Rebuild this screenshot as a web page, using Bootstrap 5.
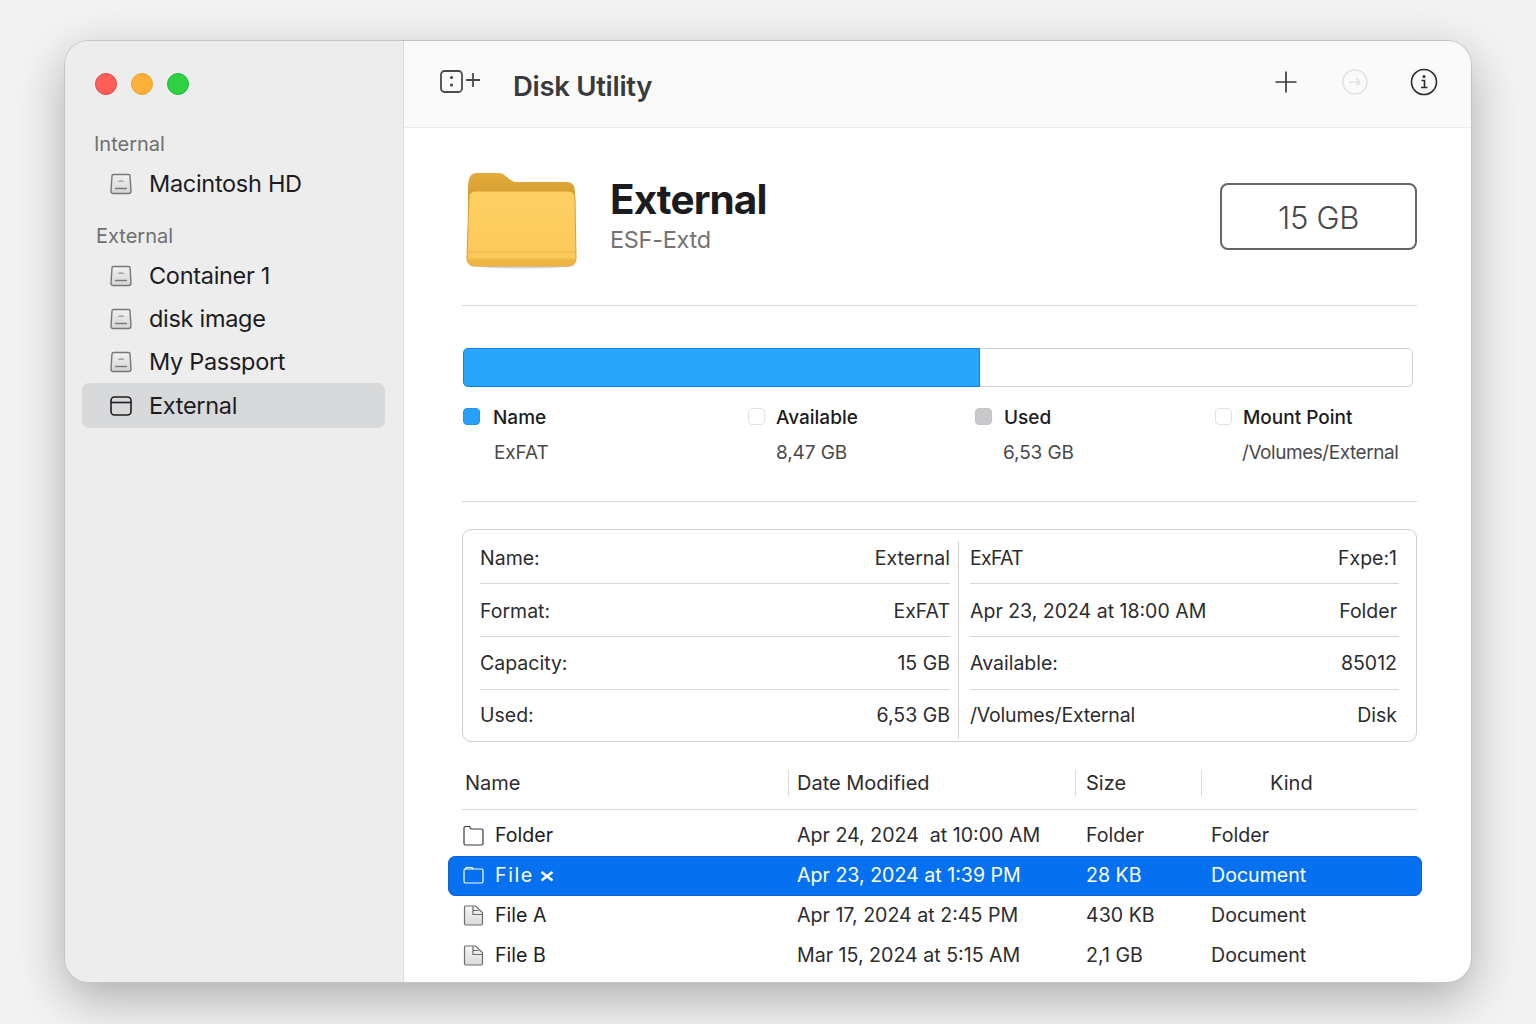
<!DOCTYPE html>
<html lang="en">
<head>
    <meta charset="UTF-8">
    <meta name="viewport" content="width=device-width, initial-scale=1.0">
    <title>Disk Utility</title>
    <link href="https://cdn.jsdelivr.net/npm/bootstrap@5.3.3/dist/css/bootstrap.min.css" rel="stylesheet">
    <style>
        html, body { height: 100%; }
        body { background: #f3f3f3; font-family: Inter, "Liberation Sans", sans-serif; color: #1d1d1f; overflow: hidden; padding: 41px 65px 42px; }
        .app-window { height: 941px; border-radius: 24px; overflow: hidden; background: #fff; box-shadow: 0 0 0 1px #c4c4c4, 0 16px 50px rgba(0,0,0,.3); }
        .side-pane { width: 339px; flex: none; background: #ededed; border-right: 1px solid #dcdcdc; padding: 32px 18px 0 17px; }
        .traffic { gap: 14px; padding-left: 13px; margin-bottom: 37px; }
        .traffic span { width: 22px; height: 22px; border-radius: 50%; border: 1px solid; }
        .t-red { background: #fe5f57; border-color: #e5443c !important; }
        .t-yellow { background: #feb13a; border-color: #ec9f25 !important; }
        .t-green { background: #30d043; border-color: #1fbb33 !important; }
        .side-head { font-size: 20px; line-height: 24px; color: #6f6f71; padding-left: 12px; }
        .side-head.second { padding-left: 14px; margin-top: 19px; }
        .side-head + .side-item { margin-top: 6px; }
        .side-item { height: 43px; font-size: 23.5px; letter-spacing: -.3px; color: #1c1c1e; padding-left: 27px; gap: 16px; border-radius: 7px; }
        .side-item.picked { height: 45px; background: #d8d9db; }
        .main-pane { min-width: 0; }
        .top-bar { height: 87px; flex: none; background: #fafafa; border-bottom: 1px solid #ececec; padding: 0 33px 0 36px; }
        .top-title { font-size: 27.5px; font-weight: 600; letter-spacing: -.3px; color: #3a3a3c; margin: 5px 0 0 31px; }
        .top-icon { margin-bottom: 4px; }
        .top-tools { gap: 41px; margin-bottom: 5px; }
        .content-pane { padding: 44px 54px 0 58px; overflow: hidden; }
        .hero-row { height: 134px; border-bottom: 1px solid #d9d9d9; }
        .hero-art { margin: 0 32px 0 4px; }
        .hero-text { padding-top: 3px; }
        .hero-name { font-size: 40.5px; font-weight: 700; line-height: 50px; letter-spacing: -.9px; color: #1c1c1e; }
        .hero-sub { font-size: 23.5px; line-height: 29px; color: #77716f; letter-spacing: -.3px; }
        .cap-box { width: 197px; height: 67px; margin-top: 11px; padding-top: 4px; border: 2px solid #666; border-radius: 8px; font-size: 31px; font-weight: 300; color: #48484a; letter-spacing: -.3px; }
        .use-bar { height: 39px; width: 950px; margin: 42px 0 0 1px; border: 1px solid #cfcfcf; border-radius: 5px; }
        .use-fill { background: #28a6fb; border: 1px solid #0f82ec; border-radius: 5px 0 0 5px; margin: -1px 0 -1px -1px; }
        .legend-row { display: grid; grid-template-columns: 285px 227px 240px 1fr; height: 115px; border-bottom: 1px solid #d9d9d9; padding: 19px 0 0 1px; }
        .legend-key { font-size: 19px; font-weight: 500; line-height: 24px; color: #1c1c1e; gap: 11px; }
        .legend-key.wide { gap: 13px; }
        .legend-key.mid { gap: 12px; }
        .swatch { width: 17px; height: 17px; border-radius: 4px; flex: none; border: 1px solid #e2e2e2; margin-top: -3px; }
        .swatch-blue { background: #2a9ff8; border-color: #2590ea; }
        .swatch-grey { background: #c9c9cb; border-color: #c4c4c6; }
        .legend-val { font-size: 19px; line-height: 24px; color: #4a4a4c; padding: 11px 0 0 31px; letter-spacing: -.1px; }
        .legend-val.tight { padding-left: 28px; }
        .legend-val.narrow { letter-spacing: -.45px; padding-left: 27px; }
        .info-box { display: grid; grid-template-columns: 478px 1fr; height: 213px; margin-top: 27px; border: 1.5px solid #cfcfcf; border-radius: 9px; padding: 11px 17px 10px 17px; }
        .info-col { min-width: 0; }
        .info-col + .info-col { border-left: 1px solid #d6d6d6; padding-left: 11px; }
        .info-col:first-child { padding-right: 8px; }
        .info-line { height: 53px; padding-top: 2px; font-size: 19.5px; color: #2c2c2e; border-bottom: 1px solid #d6d6d6; }
        .info-line:first-child { height: 43px; padding: 0 0 6px; }
        .info-line:nth-child(2) { padding-top: 4px; }
        .info-line:last-child { border-bottom: 0; height: 49px; }
        .info-val-pad { padding-right: 2px; }
        .snug-text { letter-spacing: -.7px; }
        .narrow-text { letter-spacing: -.2px; }
        .list-area { margin: 0 -5px 0 -14px; }
        .file-head, .file-line { display: grid; font-size: 19.6px; align-items: center; }
        .file-head { grid-template-columns: 326px 287px 126px 1fr; font-size: 20px; height: 68px; margin: 0 5px 0 14px; border-bottom: 1px solid #d9d9d9; color: #2c2c2e; padding-top: 14px; }
        .file-head > div { height: 26px; line-height: 26px; padding-left: 8px; border-left: 1px solid #dadada; }
        .file-head > div:first-child { border-left: 0; padding-left: 3px; }
        .file-head > div:nth-child(3) { padding-left: 10px; }
        .file-head > div:last-child { padding-left: 68px; }
        .file-line { grid-template-columns: 334px 289px 125px 1fr; height: 40px; color: #2c2c2e; padding-left: 15px; border-radius: 8px; }
        .file-rows { padding-top: 6px; }
        .file-line.picked { background: #0671f0; color: #fff; box-shadow: inset 0 0 0 1px #0a64d8; }
        .file-name { gap: 11px; color: #1c1c1e; }
        .picked .file-name { color: #fff; }
        .spread-text { letter-spacing: 1.600px; }
        .x-mark { margin-left: -5px; }
    </style>
</head>
<body>
    <div class="app-window d-flex">
        <aside class="side-pane">
            <div class="traffic d-flex">
                <span class="t-red"></span><span class="t-yellow"></span><span class="t-green"></span>
            </div>
            <div class="side-head">Internal</div>
            <div class="side-item d-flex align-items-center">
                <svg width="24" height="24" viewBox="0 0 24 24"><use href="#disk-icon"/></svg>Macintosh HD
            </div>
            <div class="side-head second">External</div>
            <div class="side-item d-flex align-items-center">
                <svg width="24" height="24" viewBox="0 0 24 24"><use href="#disk-icon"/></svg>Container 1
            </div>
            <div class="side-item d-flex align-items-center">
                <svg width="24" height="24" viewBox="0 0 24 24"><use href="#disk-icon"/></svg>disk image
            </div>
            <div class="side-item d-flex align-items-center">
                <svg width="24" height="24" viewBox="0 0 24 24"><use href="#disk-icon"/></svg>My Passport
            </div>
            <div class="side-item picked d-flex align-items-center">
                <svg width="24" height="24" viewBox="0 0 24 24" fill="none" stroke="#1c1c1e" stroke-width="1.6"><rect x="2" y="3" width="20" height="18" rx="3.5"/><path d="M2 8.5h20"/></svg>External
            </div>
        </aside>
        <main class="main-pane flex-grow-1 d-flex flex-column">
            <header class="top-bar d-flex align-items-center">
                <svg class="top-icon" width="42" height="26" viewBox="0 0 42 26" fill="none" stroke="#4a4a4c" stroke-width="1.8"><rect x="1" y="2" width="21" height="21" rx="3.5"/><circle cx="11.5" cy="8.5" r="1.6" fill="#4a4a4c" stroke="none"/><circle cx="11.5" cy="16" r="1.6" fill="#4a4a4c" stroke="none"/><path d="M26 11h14M33 4v14"/></svg>
                <div class="top-title">Disk Utility</div>
                <div class="top-tools d-flex align-items-center ms-auto">
                    <svg width="28" height="28" viewBox="0 0 28 28" fill="none" stroke="#3a3a3c" stroke-width="1.7"><path d="M3.5 14h21M14 3.5v21"/></svg>
                    <svg width="28" height="28" viewBox="0 0 28 28" fill="none" stroke="#e2e2e2" stroke-width="1.5"><circle cx="14" cy="14" r="12"/><path d="M8 14h11M15.500 10.500l3.500 3.500-3.500 3.500"/></svg>
                    <svg width="28" height="28" viewBox="0 0 28 28" fill="none" stroke="#2c2c2e" stroke-width="1.6"><circle cx="14" cy="14" r="12.500"/><path d="M11.500 12.500h3v7M11 19.500h6.500"/><circle cx="14" cy="8.500" r="1.500" fill="#2c2c2e" stroke="none"/></svg>
                </div>
            </header>
            <section class="content-pane flex-grow-1">
                <div class="hero-row d-flex">
                    <svg class="hero-art" width="112" height="98" viewBox="0 0 112 98">
                        <defs>
                            <linearGradient id="folderBack" x1="0" y1="0" x2="0" y2="1"><stop offset="0" stop-color="#e2ab3c"/><stop offset="1" stop-color="#cf9526"/></linearGradient>
                            <linearGradient id="folderFront" x1="0" y1="0" x2="0" y2="1"><stop offset="0" stop-color="#fdcf62"/><stop offset="1" stop-color="#fcc95a"/></linearGradient>
                        </defs>
                        <ellipse cx="56" cy="93" rx="53" ry="3.500" fill="#000" opacity=".16"/>
                        <path d="M2 18 C2 6 4 1 11 1 H33 C39 1 42 8 49 10 H100 C106 10 109 13 109 20 V40 H2 Z" fill="url(#folderBack)"/>
                        <path d="M1 86 L3 25 C3 21 6 19 10 19 H101 C106 19 109 21 109 26 L110 86 C110 91 107 94 102 94 H9 C4 94 1 91 1 86 Z" fill="url(#folderFront)" stroke="#d99e30" stroke-width="1"/>
                        <path d="M1.500 80 H109.500" stroke="#eeb13f" stroke-width="1"/>
                        <path d="M1.500 87 H109.500" stroke="#eeb13f" stroke-width="1"/>
                        <path d="M1.500 88 C2 91 5 93.500 9 93.500 H102 C106 93.500 109 91 109.500 88 Z" fill="#efb543"/>
                    </svg>
                    <div class="hero-text">
                        <div class="hero-name">External</div>
                        <div class="hero-sub">ESF-Extd</div>
                    </div>
                    <div class="cap-box d-flex align-items-center justify-content-center ms-auto">15 GB</div>
                </div>

                <div class="use-bar d-flex">
                    <div class="use-fill" style="width: 54.5%"></div>
                </div>

                <div class="legend-row">
                    <div>
                        <div class="legend-key wide d-flex align-items-center"><span class="swatch swatch-blue"></span>Name</div>
                        <div class="legend-val">ExFAT</div>
                    </div>
                    <div>
                        <div class="legend-key d-flex align-items-center"><span class="swatch"></span>Available</div>
                        <div class="legend-val tight">8,47 GB</div>
                    </div>
                    <div>
                        <div class="legend-key mid d-flex align-items-center"><span class="swatch swatch-grey"></span>Used</div>
                        <div class="legend-val tight">6,53 GB</div>
                    </div>
                    <div>
                        <div class="legend-key d-flex align-items-center"><span class="swatch"></span>Mount Point</div>
                        <div class="legend-val narrow">/Volumes/External</div>
                    </div>
                </div>

                <div class="info-box">
                    <div class="info-col">
                        <div class="info-line d-flex justify-content-between align-items-center"><span>Name:</span><span>External</span></div>
                        <div class="info-line d-flex justify-content-between align-items-center"><span>Format:</span><span>ExFAT</span></div>
                        <div class="info-line d-flex justify-content-between align-items-center"><span>Capacity:</span><span>15 GB</span></div>
                        <div class="info-line d-flex justify-content-between align-items-center"><span>Used:</span><span>6,53 GB</span></div>
                    </div>
                    <div class="info-col">
                        <div class="info-line d-flex justify-content-between align-items-center"><span class="snug-text">ExFAT</span><span class="info-val-pad">Fxpe:1</span></div>
                        <div class="info-line d-flex justify-content-between align-items-center"><span>Apr 23, 2024 at 18:00 AM</span><span class="info-val-pad">Folder</span></div>
                        <div class="info-line d-flex justify-content-between align-items-center"><span>Available:</span><span class="info-val-pad">85012</span></div>
                        <div class="info-line d-flex justify-content-between align-items-center"><span class="narrow-text">/Volumes/External</span><span class="info-val-pad">Disk</span></div>
                    </div>
                </div>

                <div class="list-area">
                    <div class="file-head">
                        <div>Name</div><div>Date Modified</div><div>Size</div><div>Kind</div>
                    </div>
                    <div class="file-rows">
                        <div class="file-line">
                            <div class="file-name d-flex align-items-center"><svg width="21" height="21" viewBox="0 0 21 21" fill="none" stroke="#3a3a3c" stroke-width="1.2"><path d="M1 4V18.500C1 19.500 1.500 20 2.500 20H18.500C19.500 20 20 19.500 20 18.500V5.500C20 4.500 19.500 4 18.500 4H8L6.500 1.500H2.500C1.500 1.500 1 2 1 3Z"/></svg>Folder</div>
                            <div>Apr 24, 2024 &nbsp;at 10:00 AM</div><div>Folder</div><div>Folder</div>
                        </div>
                        <div class="file-line picked">
                            <div class="file-name d-flex align-items-center"><svg width="21" height="21" viewBox="0 0 21 21" fill="none" stroke="#fff" stroke-width="1.2"><path d="M1 5.500V16.500C1 17.500 1.500 18 2.500 18H18.500C19.500 18 20 17.500 20 16.500V5.500C20 4.500 19.500 4 18.500 4H2.500C1.500 4 1 4.500 1 5.500Z"/><path d="M2 4L3.500 2.500H9L10.500 4"/></svg><span class="spread-text">File</span><svg class="x-mark" width="14" height="14" viewBox="0 0 14 14" fill="none" stroke="#fff" stroke-width="2.400"><path d="M1.500 3L12.500 11.500M12.500 3L1.500 11.500"/></svg></div>
                            <div>Apr 23, 2024 at 1:39 PM</div><div>28 KB</div><div>Document</div>
                        </div>
                        <div class="file-line">
                            <div class="file-name d-flex align-items-center"><svg width="21" height="21" viewBox="0 0 21 21"><use href="#doc-icon"/></svg>File A</div>
                            <div>Apr 17, 2024 at 2:45 PM</div><div>430 KB</div><div>Document</div>
                        </div>
                        <div class="file-line">
                            <div class="file-name d-flex align-items-center"><svg width="21" height="21" viewBox="0 0 21 21"><use href="#doc-icon"/></svg>File B</div>
                            <div>Mar 15, 2024 at 5:15 AM</div><div>2,1 GB</div><div>Document</div>
                        </div>
                        <div class="file-line">
                            <div class="file-name d-flex align-items-center"><svg width="21" height="21" viewBox="0 0 21 21"><use href="#doc-icon"/></svg></div>
                        </div>
                    </div>
                </div>
            </section>
        </main>
    </div>

    <svg width="0" height="0" class="position-absolute">
        <defs>
            <linearGradient id="diskFill" x1="0" y1="0" x2="0" y2="1"><stop offset="0" stop-color="#f2f2f2"/><stop offset="1" stop-color="#d4d4d4"/></linearGradient>
            <linearGradient id="docFill" x1="0" y1="0" x2="0" y2="1"><stop offset="0" stop-color="#f8f8f8"/><stop offset="1" stop-color="#d8d8d8"/></linearGradient>
            <symbol id="disk-icon" viewBox="0 0 24 24">
                <path d="M4.500 2.500H19.500C20.500 2.500 21 3 21 4L22 19C22 20.800 21 21.500 19.500 21.500H4.500C3 21.500 2 20.800 2 19L3 4C3 3 3.500 2.500 4.500 2.500Z" fill="url(#diskFill)" stroke="#77777a" stroke-width="1.400"/>
                <path d="M8.500 10C9 7.500 15 7.500 15.500 10Z" fill="#a9a9ab"/>
                <path d="M6 16.500H18" stroke="#77777a" stroke-width="1.400"/>
            </symbol>
            <symbol id="doc-icon" viewBox="0 0 21 21">
                <path d="M2.500 1H12.500L19.500 7.500V18.500C19.500 19.500 19 20 18 20H3C2 20 1.500 19.500 1.500 18.500V2C1.500 1.500 2 1 2.500 1Z" fill="url(#docFill)" stroke="#6d6d70" stroke-width="1.200"/>
                <path d="M10 1.500V9.500H19M10 5.500H15.500" fill="none" stroke="#6d6d70" stroke-width="1.200"/>
            </symbol>
        </defs>
    </svg>
    <script src="https://cdn.jsdelivr.net/npm/bootstrap@5.3.3/dist/js/bootstrap.bundle.min.js"></script>
</body>
</html>
